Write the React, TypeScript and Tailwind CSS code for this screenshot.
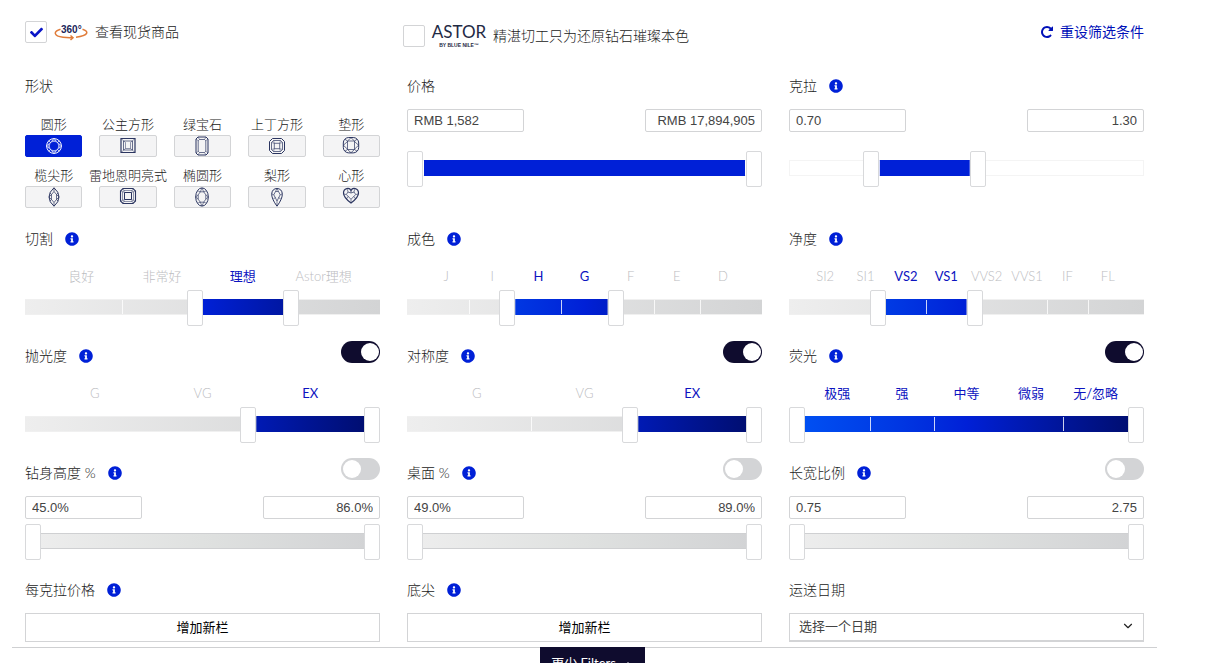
/**
 * @file App.tsx
 * @description Diamond search filter panel.
 */
import React, { useState } from 'react';
import { FaCheck, FaInfoCircle } from 'react-icons/fa';
import { ChevronDown, ChevronUp } from 'lucide-react';

type ShapeIcon = { label: string; art: React.ReactNode };

const SHAPES: ShapeIcon[] = [
  {
    label: '圆形',
    art: (
      <>
        <circle cx="10" cy="10" r="7.4" strokeWidth="1" />
        <path d="M7.9 5h4.2L15 7.9v4.2L12.100 15H7.900L5 12.100V7.900z" />
        <path d="M10 5l3.500 1.500L15 10l-1.500 3.500L10 15l-3.500-1.500L5 10l1.500-3.500z" strokeWidth=".5" />
        <path d="M7.900 5l2.100-2.600L12.100 5M15 7.900l2.600 2.100-2.600 2.100M7.900 15l2.100 2.600 2.100-2.600M5 7.900L2.400 10 5 12.100M4.600 4.600l1.900 1.900M15.400 4.600l-1.900 1.900M4.600 15.400l1.900-1.900M15.400 15.400l-1.900-1.900" />
      </>
    ),
  },
  {
    label: '公主方形',
    art: (
      <>
        <path d="M3 2.500h14v14H3z" strokeWidth="1.200" />
        <path d="M5.500 5h9v9h-9z" />
        <path d="M7.500 6.500v6h5v-6M3 2.500l4.500 4M17 2.500l-4.500 4M3 16.500l4.500-4M17 16.500l-4.500-4" strokeWidth=".5" />
      </>
    ),
  },
  {
    label: '绿宝石',
    art: (
      <>
        <path d="M6 1h8l2 2v14l-2 2H6l-2-2V3z" strokeWidth="1" />
        <path d="M7.500 3.500h5l1.300 1.300v10.400l-1.300 1.300h-5l-1.300-1.300V4.800z" />
        <path d="M4 3l2.200 1.800M16 3l-2.200 1.800M4 17l2.200-1.800M16 17l-2.200-1.800M6 1l1.500 2.500M14 1l-1.500 2.500M6 19l1.500-2.500M14 19l-1.500-2.500" strokeWidth=".5" />
      </>
    ),
  },
  {
    label: '上丁方形',
    art: (
      <>
        <path d="M5.500 2.500h9l3 3v9l-3 3h-9l-3-3v-9z" strokeWidth="1" />
        <path d="M6.500 4.500h7l2 2v7l-2 2h-7l-2-2v-7z" />
        <path d="M7.300 7.300h5.400v5.400H7.300z" />
        <path d="M4.500 6.500l2.800.8-.8-2.800M15.500 6.500l-2.800.8.8-2.800M4.500 13.500l2.800-.8-.8 2.800M15.500 13.500l-2.800-.8.8 2.800" strokeWidth=".5" />
      </>
    ),
  },
  {
    label: '垫形',
    art: (
      <>
        <rect x="2.300" y="1.500" width="15.400" height="15.400" rx="5.500" strokeWidth="1" />
        <path d="M6.500 5h7v8.500h-7z" />
        <path d="M6.500 5L10 1.700 13.500 5M6.500 13.500l3.500 3.200 3.500-3.200M6.500 5.500L2.400 9.200l4.100 4M13.500 5.500l4.100 3.700-4.100 4M4 3.300L6.500 5M16 3.300L13.500 5M4 15.200l2.500-1.700M16 15.200l-2.500-1.700" />
      </>
    ),
  },
  {
    label: '榄尖形',
    art: (
      <>
        <path d="M10 .8q5 4.200 5 9.200t-5 9.200Q5 15 5 10T10 .8z" strokeWidth="1" />
        <path d="M10 4.500l2.500 3V12.500L10 15.500l-2.500-3V7.500z" />
        <path d="M10 .8v3.700M10 15.500v3.700M6 6l1.500 1.500L5 10l2.500 2.500L6 14M14 6l-1.500 1.500L15 10l-2.500 2.500L14 14" />
      </>
    ),
  },
  {
    label: '雷地恩明亮式',
    art: (
      <>
        <path d="M5 1.500h10L17.500 4v10L15 16.500H5L2.500 14V4z" strokeWidth="1.100" />
        <path d="M6 3.500h8L15.500 5v8L14 14.500H6L4.500 13V5z" strokeWidth=".5" />
        <path d="M6.500 5.500h7v7h-7z" strokeWidth="1" />
        <path d="M2.500 4l4 1.500L5 1.500M17.500 4l-4 1.500 1.500-4M2.500 14l4-1.500-1.500 4M17.500 14l-4-1.500 1.500 4" strokeWidth=".4" />
      </>
    ),
  },
  {
    label: '椭圆形',
    art: (
      <>
        <ellipse cx="10" cy="10" rx="6.300" ry="9.100" strokeWidth="1" />
        <path d="M8.300 4.800h3.400l2.100 3v4.400l-2.100 3H8.300l-2.100-3V7.800z" />
        <path d="M8.300 4.800L10 1l1.700 3.800M8.300 15.200L10 19l1.700-3.800M6.200 7.800L3.700 10l2.500 2.200M13.800 7.800l2.500 2.200-2.500 2.200M5.500 3.700l2.800 1.100M14.500 3.700l-2.800 1.100M5.500 16.300l2.800-1.100M14.500 16.300l-2.800-1.100" strokeWidth=".6" />
      </>
    ),
  },
  {
    label: '梨形',
    art: (
      <>
        <path d="M10 19.200Q4.700 12 4.700 7.300C4.700 3.500 7 1.500 10 1.500s5.300 2 5.300 5.800Q15.300 12 10 19.200z" strokeWidth="1" />
        <path d="M8.500 4.500h3l1.700 3.300L10 14 6.800 7.800z" />
        <path d="M8.500 4.500L10 1.500l1.500 3M6.800 7.800L4.700 7M13.200 7.800l2.100-.8M10 14v5M6.300 12l2.200-1.500M13.700 12l-2.200-1.500" strokeWidth=".6" />
      </>
    ),
  },
  {
    label: '心形',
    art: (
      <>
        <path d="M10 16Q2.500 10.500 2.500 6C2.500 1 8.500 0 10 3.500 11.500 0 17.500 1 17.500 6q0 4.500-7.500 10z" strokeWidth="1.200" />
        <path d="M7 5l3 1 3-1 1.700 2.500L10 12.300 5.300 7.500z" />
        <path d="M7 5l-.7-2.800M13 5l.7-2.800M10 3.500V6M5.300 7.500L2.700 7M14.700 7.500l2.600-.5M10 12.300V16M5.300 12l1.900-2.600M14.700 12l-1.900-2.600" strokeWidth=".6" />
      </>
    ),
  },
];

const THUMB =
  'absolute top-0 h-9 w-[calc(100%-16px)] appearance-none bg-transparent pointer-events-none outline-none ' +
  '[&::-webkit-slider-thumb]:appearance-none [&::-webkit-slider-thumb]:pointer-events-auto ' +
  '[&::-webkit-slider-thumb]:h-9 [&::-webkit-slider-thumb]:w-4 [&::-webkit-slider-thumb]:rounded-xs ' +
  '[&::-webkit-slider-thumb]:border [&::-webkit-slider-thumb]:border-[#d8d9db] [&::-webkit-slider-thumb]:bg-white';

const TRACKS = {
  plain: 'border border-[#f4f4f4] bg-white',
  steps: 'border-y border-[#f0f0f0] bg-linear-to-r from-[#eeeeee] to-[#d3d4d5]',
  muted: 'border-y border-[#cfd0d2] bg-linear-to-r from-[#eeeeee] via-[#dfe1e0] to-[#d1d2d4]',
};

const FILLS = {
  solid: 'bg-[#0020d7]',
  gradient: 'bg-linear-to-r from-[#004ff2] via-[#0020d7] to-[#000e72]',
  none: 'bg-transparent',
};

type RangeProps = {
  name: string;
  from?: number;
  to?: number;
  max?: number;
  step?: number;
  labels?: string[];
  ticks?: number[];
  track?: keyof typeof TRACKS;
  fill?: keyof typeof FILLS;
};

const RangeSlider: React.FC<RangeProps> = ({
  name,
  from = 0,
  to,
  max = 100,
  step = 1,
  labels,
  ticks = [],
  track = 'plain',
  fill = 'solid',
}) => {
  const top = labels ? labels.length : max;
  const [low, setLow] = useState(from);
  const [high, setHigh] = useState(to ?? top);

  return (
    <div>
      {labels && (
        <div className="mt-[15px] mb-[3px] flex px-4 text-[13px] leading-[22px]">
          {labels.map((label, i) => (
            <span
              key={label}
              className={`flex w-0 flex-1 justify-center whitespace-nowrap ${
                i >= low && i < high ? 'text-[#0d14c0]' : 'font-light text-[#bcbdbf]'
              }`}
            >
              {label}
            </span>
          ))}
        </div>
      )}
      <div className="relative h-9 pt-[9px]">
        <div className={`relative h-4 px-4 ${TRACKS[track]}`}>
          {/* Selected part and dividers share the inner width */}
          <div className="absolute inset-x-4 -inset-y-px">
            <div
              className={`h-full ${FILLS[fill]}`}
              style={{ clipPath: `inset(0 ${100 - (high / top) * 100}% 0 ${(low / top) * 100}%)` }}
            />
            {ticks.map(t => (
              <span
                key={t}
                className="absolute inset-y-px w-px bg-white/80"
                style={{ left: `${(t / top) * 100}%` }}
              />
            ))}
          </div>
        </div>
        <input
          type="range"
          aria-label={`${name} min`}
          min={0}
          max={top}
          step={step}
          value={low}
          onChange={e => setLow(Math.min(Number(e.target.value), high))}
          className={`left-0 ${THUMB}`}
        />
        <input
          type="range"
          aria-label={`${name} max`}
          min={0}
          max={top}
          step={step}
          value={high}
          onChange={e => setHigh(Math.max(Number(e.target.value), low))}
          className={`right-0 ${THUMB}`}
        />
      </div>
    </div>
  );
};

const Title: React.FC<{ text: string; info?: boolean; toggle?: boolean }> = ({ text, info, toggle }) => (
  <div className="flex h-[22px] items-start justify-between">
    <div className="flex items-center gap-3">
      <h2 className="text-sm leading-[22px] font-light">{text}</h2>
      {info && (
        <button type="button" aria-label={`${text} info`} className="text-[#0020d7]">
          <FaInfoCircle size={14} />
        </button>
      )}
    </div>
    {toggle !== undefined && (
      <input
        type="checkbox"
        role="switch"
        aria-label={text}
        defaultChecked={toggle}
        className="-mt-1 h-[22px] w-[39px] appearance-none rounded-full bg-[#d3d4d6] p-[2px] before:block before:size-[18px] before:rounded-full before:bg-white checked:bg-[#0f0c2e] checked:before:translate-x-[18px]"
      />
    )}
  </div>
);

const MinMax: React.FC<{ name: string; min: string; max: string }> = ({ name, min, max }) => (
  <div className="mt-3 flex justify-between font-['Liberation_Sans',sans-serif] text-[13px] text-[#444]">
    <input
      type="text"
      aria-label={`${name} from`}
      defaultValue={min}
      className="h-[23px] w-[33%] rounded-xs border border-[#d3d4d6] px-1.5 outline-none"
    />
    <input
      type="text"
      aria-label={`${name} to`}
      defaultValue={max}
      className="h-[23px] w-[33%] rounded-xs border border-[#d3d4d6] px-1.5 text-right outline-none"
    />
  </div>
);

const CheckBox: React.FC<{ id: string; checked?: boolean }> = ({ id, checked }) => (
  <span className="relative flex size-[22px]">
    <input
      id={id}
      type="checkbox"
      defaultChecked={checked}
      className="peer size-[22px] appearance-none rounded-xs border border-[#d3d4d6] bg-white"
    />
    <FaCheck
      size={13}
      className="pointer-events-none absolute inset-0 m-auto hidden text-[#0a16c8] peer-checked:block"
    />
  </span>
);

const Spin360 = () => (
  <svg width="34" height="18" viewBox="0 0 34 18" aria-hidden="true">
    <g fill="none" stroke="#e07b39" strokeWidth="1.500">
      <path d="M6.500 6.200C-1 8.500-.5 13 9 14.300c3 .4 6 .6 9.500.4" />
      <path d="M28.500 6.200c6.500 2 6.500 6.500-6.500 8" />
      <path d="M16.500 12.500l2.500 2.200-2.500 2.300" />
    </g>
    <text
      x="7"
      y="10"
      fontFamily="Liberation Sans, sans-serif"
      fontWeight="700"
      fontSize="10"
      fill="#1b2559"
    >
      360°
    </text>
  </svg>
);

const AstorLogo = () => (
  <svg
    width="56"
    height="26"
    viewBox="0 0 56 26"
    fill="#1f2a44"
    fontFamily="Lato, sans-serif"
    fontWeight="400"
    textAnchor="middle"
    className="overflow-visible"
  >
    <text x="28" y="15" fontSize="17">
      ASTOR
    </text>
    <text x="28" y="24" fontSize="5" fontWeight="700" fontFamily="Liberation Sans, sans-serif">
      BY BLUE NILE™
    </text>
  </svg>
);

const AddColumn = () => (
  <button
    type="button"
    className="mt-3 h-[29px] w-full border border-[#d3d4d6] bg-white text-[13px] text-black"
  >
    增加新栏
  </button>
);

const App: React.FC = () => {
  const [shape, setShape] = useState('圆形');

  return (
    <main className="bg-white pr-[68px] pl-3 font-['Lato','Noto_Sans_CJK_SC',sans-serif] text-[#222]">
      <div className="border-b border-[#cfd0d2] px-[13px] pb-[5px]">
        {/* Quick options */}
        <div className="grid h-[75px] grid-cols-3 items-start gap-x-[27px] pt-[21px] text-sm leading-[22px] font-light">
          <label htmlFor="in-stock" className="flex items-center gap-[7px]">
            <CheckBox id="in-stock" checked />
            <Spin360 />
            查看现货商品
          </label>
          <label htmlFor="astor" className="-ml-1 flex items-center gap-1.5 pt-[2px] whitespace-nowrap">
            <CheckBox id="astor" />
            <AstorLogo />
            精湛切工只为还原钻石璀璨本色
          </label>
          <button type="button" className="flex items-center gap-1.5 justify-self-end text-[#0010b8]">
            <svg width="14" height="14" viewBox="0 0 1792 1792" fill="currentColor" aria-hidden="true">
              <path d="M1664 256v448q0 26-19 45t-45 19h-448q-42 0-59-40-17-39 14-69l138-138q-148-137-349-137-104 0-198.500 40.500t-163.500 109.500-109.500 163.500-40.500 198.500 40.500 198.500 109.500 163.500 163.500 109.500 198.500 40.500q119 0 225-52t179-147q7-10 23-12 15 0 25 9l137 138q9 8 9.500 20.500t-7.500 22.500q-109 132-264 204.500t-327 72.500q-156 0-298-61t-245-164-164-245-61-298 61-298 164-245 245-164 298-61q147 0 284.500 55.500t244.500 156.500l130-129q29-31 70-14 39 17 39 59z" />
            </svg>
            <span className="font-normal">重设筛选条件</span>
          </button>
        </div>

        {/* Filters */}
        <div className="grid grid-cols-3 gap-x-[27px] gap-y-[19px]">
          <section className="pb-[1px]">
            <Title text="形状" />
            <div className="mt-[17px] grid grid-cols-5 gap-x-[17px] gap-y-2">
              {SHAPES.map(({ label, art }) => (
                <div key={label} className="flex flex-col items-center gap-px text-[13px] leading-5 font-light">
                  <span id={`shape-${label}`} className="whitespace-nowrap">
                    {label}
                  </span>
                  <button
                    type="button"
                    aria-labelledby={`shape-${label}`}
                    aria-pressed={shape === label}
                    onClick={() => setShape(label)}
                    className={`flex h-[22px] w-full items-center justify-center rounded-xs border ${
                      shape === label
                        ? 'border-[#0020d7] bg-[#0020d7] text-white'
                        : 'border-[#d3d4d6] bg-[#f4f4f5] text-[#2b3560]'
                    }`}
                  >
                    <svg width="20" height="20" viewBox="0 0 20 20" fill="none" stroke="currentColor" strokeWidth=".7">
                      {art}
                    </svg>
                  </button>
                </div>
              ))}
            </div>
          </section>

          <section>
            <Title text="价格" />
            <MinMax name="价格" min="RMB 1,582" max="RMB 17,894,905" />
            <div className="mt-[19px]">
              <RangeSlider name="价格" />
            </div>
          </section>

          <section>
            <Title text="克拉" info />
            <MinMax name="克拉" min="0.70" max="1.30" />
            <div className="mt-[19px]">
              <RangeSlider name="克拉" from={23} to={51} />
            </div>
          </section>

          <section>
            <Title text="切割" info />
            <RangeSlider
              name="切割"
              labels={['良好', '非常好', '理想', 'Astor理想']}
              from={2}
              to={3}
              ticks={[1]}
              track="steps"
              fill="gradient"
            />
          </section>

          <section>
            <Title text="成色" info />
            <RangeSlider
              name="成色"
              labels={['J', 'I', 'H', 'G', 'F', 'E', 'D']}
              from={2}
              to={4}
              ticks={[1, 3, 5, 6]}
              track="steps"
              fill="gradient"
            />
          </section>

          <section>
            <Title text="净度" info />
            <RangeSlider
              name="净度"
              labels={['SI2', 'SI1', 'VS2', 'VS1', 'VVS2', 'VVS1', 'IF', 'FL']}
              from={2}
              to={4}
              ticks={[3, 6, 7]}
              track="steps"
              fill="gradient"
            />
          </section>

          <section>
            <Title text="抛光度" info toggle />
            <RangeSlider name="抛光度" labels={['G', 'VG', 'EX']} from={2} track="steps" fill="gradient" />
          </section>

          <section>
            <Title text="对称度" info toggle />
            <RangeSlider
              name="对称度"
              labels={['G', 'VG', 'EX']}
              from={2}
              ticks={[1]}
              track="steps"
              fill="gradient"
            />
          </section>

          <section>
            <Title text="荧光" info toggle />
            <RangeSlider
              name="荧光"
              labels={['极强', '强', '中等', '微弱', '无/忽略']}
              ticks={[1, 2, 4]}
              track="steps"
              fill="gradient"
            />
          </section>

          <section>
            <Title text="钻身高度 %" info toggle={false} />
            <MinMax name="钻身高度" min="45.0%" max="86.0%" />
            <div className="mt-[5px]">
              <RangeSlider name="钻身高度" track="muted" fill="none" />
            </div>
          </section>

          <section>
            <Title text="桌面 %" info toggle={false} />
            <MinMax name="桌面" min="49.0%" max="89.0%" />
            <div className="mt-[5px]">
              <RangeSlider name="桌面" track="muted" fill="none" />
            </div>
          </section>

          <section>
            <Title text="长宽比例" info toggle={false} />
            <MinMax name="长宽比例" min="0.75" max="2.75" />
            <div className="mt-[5px]">
              <RangeSlider name="长宽比例" track="muted" fill="none" />
            </div>
          </section>

          <section>
            <Title text="每克拉价格" info />
            <AddColumn />
          </section>

          <section>
            <Title text="底尖" info />
            <AddColumn />
          </section>

          <section>
            <Title text="运送日期" />
            <div className="relative mt-3">
              <select
                aria-label="运送日期"
                className="block h-[29px] w-full appearance-none border border-b-2 border-[#d3d4d6] bg-white px-[9px] text-[13px] text-[#444] outline-none"
              >
                <option>选择一个日期</option>
              </select>
              <ChevronDown
                size={14}
                strokeWidth={2}
                className="pointer-events-none absolute top-[6px] right-[9px]"
              />
            </div>
          </section>
        </div>
      </div>

      {/* Collapse tab */}
      <div className="-mt-px flex h-4 justify-center pl-4">
        <button
          type="button"
          className="flex h-[34px] items-center gap-1.5 bg-[#0f0c2e] px-[11px] text-[13px] whitespace-nowrap text-white"
        >
          更少 Filters
          <ChevronUp size={12} />
        </button>
      </div>
    </main>
  );
};

export default App;
